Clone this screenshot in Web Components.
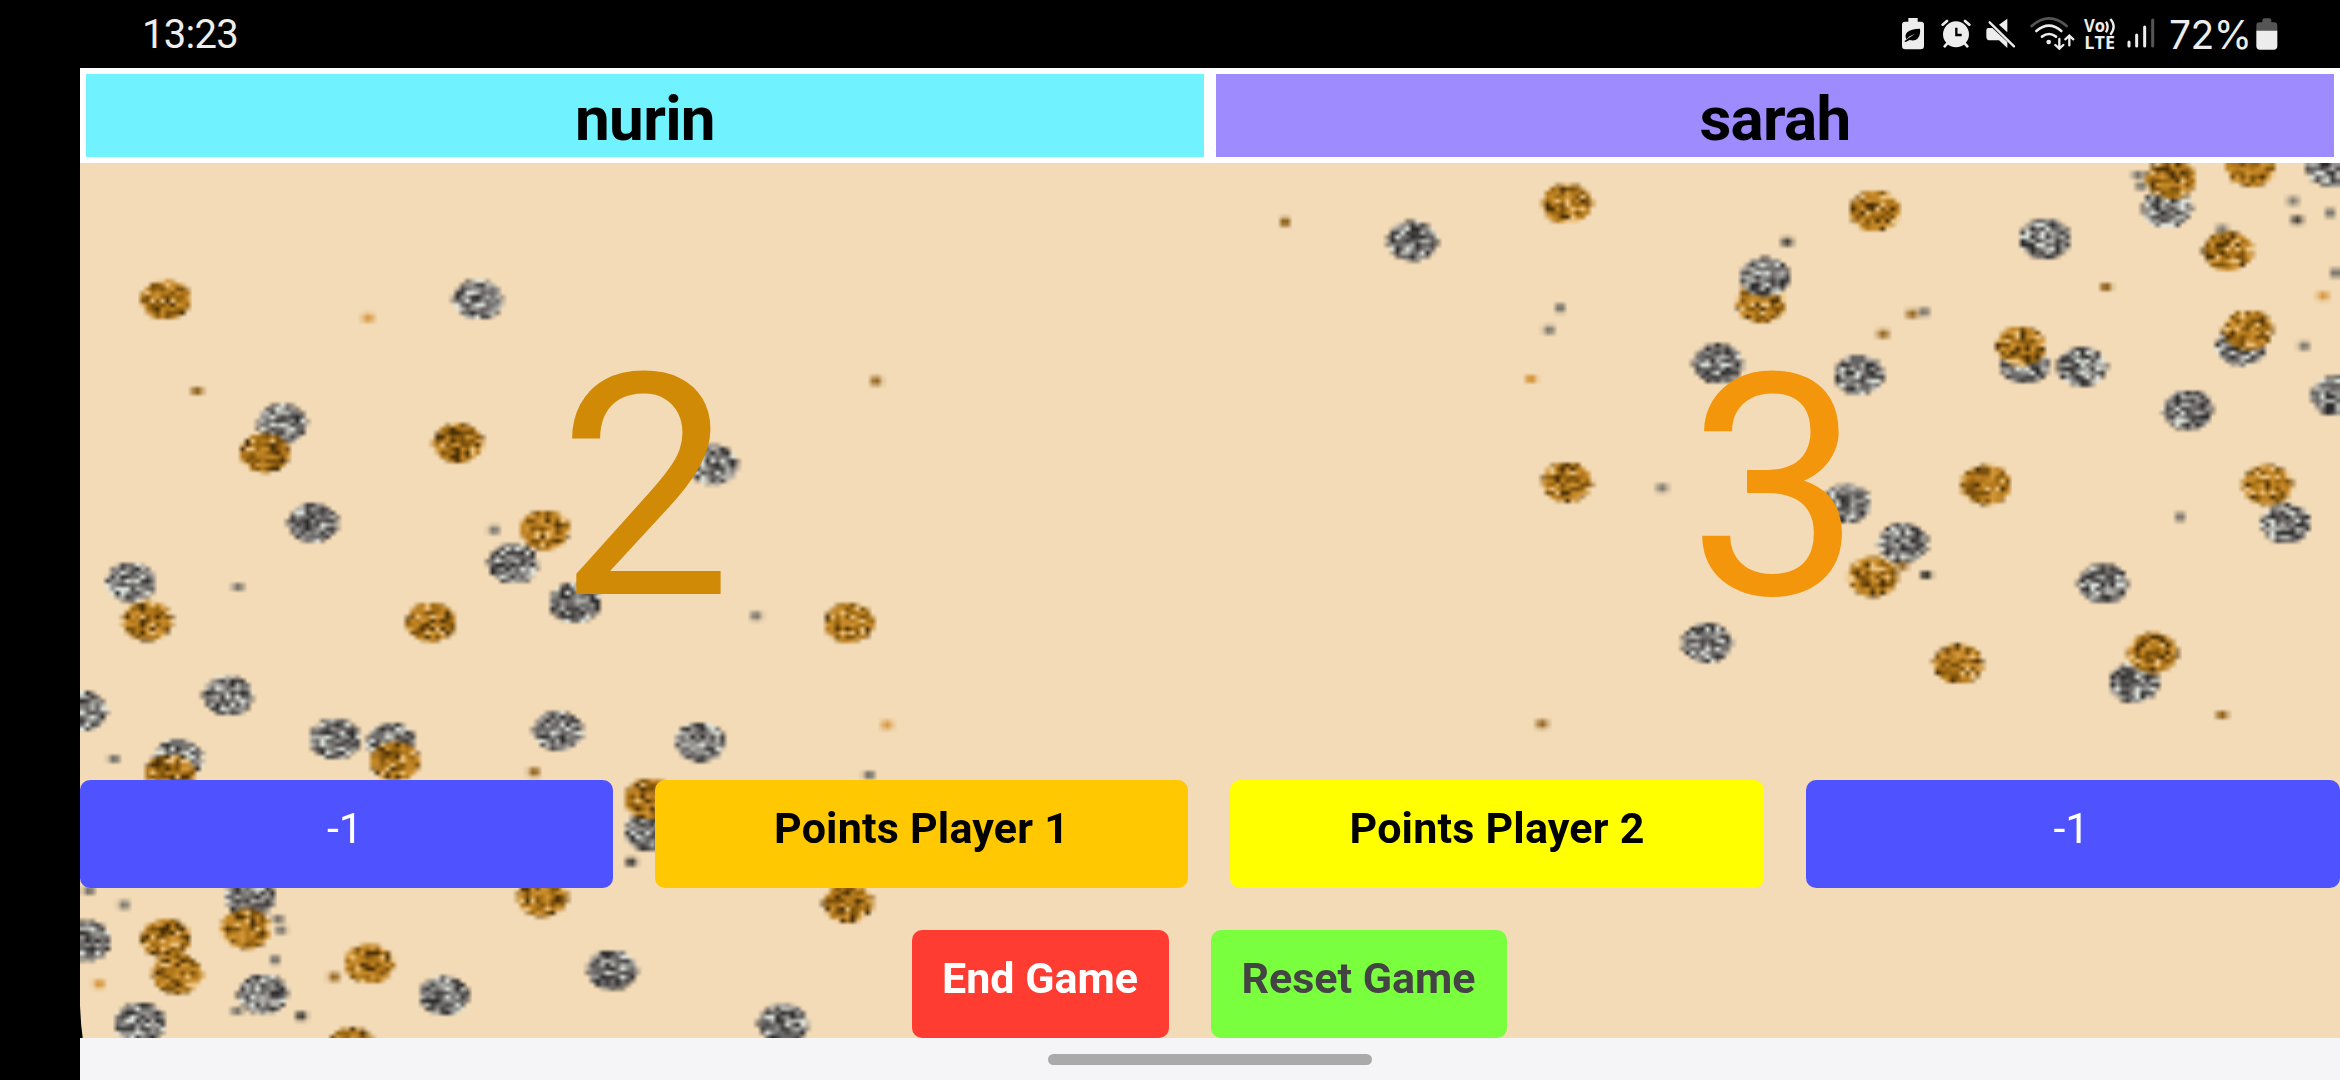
<!DOCTYPE html>
<html lang="en">
<head>
<meta charset="utf-8">
<title>Score counter</title>
<style>
html,body{margin:0;height:100%;background:#000;overflow:hidden}
body{font-family:Roboto,"Liberation Sans",sans-serif}
</style>
</head>
<body>
<score-app></score-app>
<script>
const define = (name, html, setup) => customElements.define(name, class extends HTMLElement {
  constructor() {
    super();
    this.attachShadow({mode: 'open'}).innerHTML = html;
  }
  connectedCallback() { if (setup) setup(this, this.shadowRoot); }
});

define('status-bar', `
<style>
:host{display:flex;height:68px;box-sizing:border-box;padding:13px 62px 0 142px;justify-content:space-between;background:#000;color:#ededed}
.icons{display:flex;height:40px}
svg{display:block;height:40px;flex:none}
.t{font-size:40px;line-height:44px;height:44px;white-space:nowrap;letter-spacing:-.7px}
.pct{width:80px;margin:0 7px 0 14px;font-family:Inter,sans-serif;font-size:39px;letter-spacing:-.6px}
</style>
<div class="t">13:23</div>
<div class="icons">
<svg style="width:22px;margin-right:17px" viewBox="129 40 66 120"><path fill="#ededed" d="M148 55h28v11h10q9 0 9 9v64q0 10-10 10h-46q-10 0-10-10V75q0-9 9-9h10z"/><path fill="#000" d="M142 119c-8-18 4-31 41-32 3 25-10 40-31 34l-12 6-4-2 13-10 20-13-17 8z"/></svg>
<svg style="width:30px;margin-right:15px" viewBox="245 40 90 120"><g fill="none" stroke="#ededed" stroke-width="8" stroke-linecap="round"><path d="M250 75l13-11M330 75l-13-11M264 131l-8 9M316 131l8 9"/></g><circle cx="290" cy="104" r="39" fill="#ededed"/><path d="M291 84v22h16" fill="none" stroke="#000" stroke-width="7"/></svg>
<svg style="width:30px;margin-right:14px" viewBox="380 40 90 120"><path fill="#ededed" d="M444 57v41l-25-23zM381 91q0-6 6-6h12l45 42v18l-25-23h-27q-11 0-11-11z"/><path d="M391 68l73 72" stroke="#ededed" stroke-width="7" stroke-linecap="round"/></svg>
<svg style="width:45px;margin-right:9px" viewBox="512 40 135 120"><g fill="none" stroke-linecap="round" stroke-width="8"><path stroke="#555" d="M517 79Q569 33 622 79"/><g stroke="#ededed"><path d="M531 94Q569 62 606 94M548 111Q569 95 590 111"/><path stroke-width="7" d="M600 118v26M588 136l12 11 12-11M630 137v-26M618 119l12-11 12 11"/></g></g><circle cx="568" cy="127" r="7" fill="#ededed"/></svg>
<svg style="width:32px;margin-right:11px" viewBox="672 40 96 120"><g fill="#ededed" font-family="Open Sans,sans-serif" font-weight="700"><text x="672" y="96" font-size="54" textLength="63" lengthAdjust="spacingAndGlyphs">Vo</text><text x="673" y="148" font-size="54" textLength="92" lengthAdjust="spacingAndGlyphs">LTE</text></g><g fill="none" stroke="#ededed" stroke-width="7"><path d="M738 66q10 15 0 32M751 58q20 22 0 47"/></g></svg>
<svg style="width:28px" viewBox="803 40 84 120"><g stroke="#ededed" stroke-width="9" stroke-linecap="round"><path d="M809 127v12M832 106v33M856 82v57"/><path stroke="#555" d="M880 61v78"/></g></svg>
<div class="t pct">72%</div>
<svg style="width:22px" viewBox="1190 40 66 120"><path fill="#555" d="M1191 94V78q0-10 10-10h8v-6q0-6 6-6h15q6 0 6 6v6h8q10 0 10 10v16z"/><path fill="#ededed" d="M1191 93h63v46q0 11-11 11h-41q-11 0-11-11z"/></svg>
</div>`);

define('player-name', `
<style>
:host{display:block;flex:1;margin:6px;height:83px;box-sizing:border-box;background:var(--fill);font:bold 62px/90px Roboto,sans-serif;text-align:center;color:#000;letter-spacing:-.7px}
</style><slot></slot>`);

define('score-value', `
<style>
:host{display:block;flex:1;text-align:center;font:400 310px/363px Roboto,sans-serif;color:var(--ink)}
</style><slot></slot>`);

define('game-button', `
<style>
:host{display:block;box-sizing:border-box;height:108px;border-radius:10px;background:var(--fill);color:var(--ink,#000);font:700 43px/97px Roboto,sans-serif;text-align:center;white-space:nowrap}
:host([light]){font-weight:400;padding-right:3px}
</style><slot></slot>`);

// [x, y] centres in window coordinates; drawn in list order so later dots overlap earlier ones.
const DOTS = {
 s:[[479,299],[283,423],[314,522],[132,581],[514,563],[576,602],[229,695],[83,710],[336,738],[392,742],[559,730],[179,758],[651,830],[251,897],[87,940],[141,1022],[264,993],[445,995],[613,969],[714,464],[701,741],[784,1023],[1413,240],[1719,363],[1860,374],[2046,238],[2026,363],[2083,366],[2168,207],[2332,166],[2242,345],[2337,395],[2189,409],[1847,503],[1904,542],[1708,642],[2287,523],[2104,583],[2135,682]],
 g:[[167,299],[266,452],[459,442],[149,620],[546,529],[432,621],[396,760],[171,773],[651,798],[543,896],[247,928],[167,938],[178,973],[370,963],[353,1047],[850,622],[849,902],[1568,203],[1876,210],[1762,302],[2022,345],[2172,178],[2252,166],[2229,250],[2249,329],[1568,481],[1874,576],[1987,484],[2269,484],[1959,663],[2153,652]],
 top:[[1766,276]]
};
const SPECKS = {
 '#d4943a':[[368,318],[887,725],[1531,379],[99,984],[2323,296]],
 '#8f601c':[[197,391],[534,772],[334,977],[876,381],[1285,222],[1912,314],[1883,334],[2106,287],[1542,724],[2222,715],[1902,566]],
 '#78746b':[[238,587],[494,530],[114,759],[89,891],[124,905],[278,919],[281,930],[275,960],[237,1011],[756,616],[869,775],[1560,308],[1549,330],[1924,312],[2138,175],[2141,186],[2293,201],[2330,213],[2222,229],[2335,273],[2304,346],[1662,488],[2180,517]],
 '#3a3731':[[631,862],[301,1016],[1787,242],[2297,220],[1926,575]]
};
const GOLD = ['#4a2e04','#7d520f','#99660f','#b27a1c','#c78a28','#b0741a','#d3973a','#efc581','#7a4f0c','#c08426'];
const SILVER = ['#2b2a2b','#4b4848','#666262','#777371','#95928f','#6c6a69','#b2b2ac','#dde3dc','#403e3d','#8f918e'];

define('glitter-layer', `
<style>:host{display:block}canvas{display:block;width:2260px;height:876px}</style>
<canvas width="452" height="219"></canvas>`, (host, root) => {
  const c = root.querySelector('canvas').getContext('2d');
  let seed = 7321;
  const rnd = () => (seed = (seed * 16807) % 2147483647) / 2147483647;
  const dot = (p, tones) => {
    const cx = (p[0] - 81) / 5, cy = (p[1] - 162) / 4;
    for (let y = Math.floor(cy - 6); y < cy + 6; y++)
      for (let x = Math.floor(cx - 6); x < cx + 6; x++) {
        const d = Math.hypot(x + .5 - cx, y + .5 - cy);
        if (d > 5.2) continue;
        c.globalAlpha = d > 4.8 ? .55 : 1;
        c.fillStyle = tones[Math.floor(rnd() * tones.length)];
        c.fillRect(x, y, 1, 1);
      }
    c.globalAlpha = 1;
  };
  DOTS.s.forEach(p => dot(p, SILVER));
  DOTS.g.forEach(p => dot(p, GOLD));
  DOTS.top.forEach(p => dot(p, SILVER));
  for (const tone in SPECKS) for (const p of SPECKS[tone]) {
    c.fillStyle = tone;
    c.fillRect((p[0] - 80) / 5 - 1, (p[1] - 163) / 4 - 1, 2, 2);
  }
});

define('play-field', `
<style>
:host{display:grid;height:875px;background:#f3dbb7;overflow:hidden;clip-path:polygon(0 0,100% 0,100% 100%,2.7px 100%,1.2px 862px,0 843px)}
glitter-layer,.content{grid-area:1/1}
.content{display:flex;flex-direction:column;height:875px;z-index:1}
.scores{display:flex;height:617px;box-sizing:border-box;padding-top:144px}
.row{display:grid;grid-template-columns:533px 533px 534px 534px;gap:42px}
.actions{display:flex;gap:42px;justify-content:center;margin:42px 2px 0 0}
</style>
<glitter-layer></glitter-layer>
<div class="content">
<div class="scores"><score-value style="--ink:#d18a06">2</score-value><score-value style="--ink:#f3960b">3</score-value></div>
<div class="row">
<game-button light style="--fill:#4f52ff;--ink:#fff">-1</game-button>
<game-button style="--fill:#ffc800;letter-spacing:.2px">Points Player 1</game-button>
<game-button style="--fill:#ff0;letter-spacing:.2px">Points Player 2</game-button>
<game-button light style="--fill:#4f52ff;--ink:#fff">-1</game-button>
</div>
<div class="actions">
<game-button style="--fill:#ff3c32;--ink:#fff;width:257px">End Game</game-button>
<game-button style="--fill:#7aff3e;--ink:#444;width:296px">Reset Game</game-button>
</div>
</div>`);

define('gesture-bar', `
<style>
:host{display:flex;justify-content:center;height:42px;box-sizing:border-box;padding-top:16px;background:#f5f5f8}
div{width:324px;height:11px;border-radius:6px;background:#aaa}
</style><div></div>`);

define('score-app', `
<style>
:host{display:flex;flex-direction:column;width:2340px;height:1080px;background:#000}
main{margin-left:80px}
header{display:flex;background:#fff}
</style>
<status-bar></status-bar>
<main>
<header><player-name style="--fill:#70f2ff">nurin</player-name><player-name style="--fill:#9e8cff">sarah</player-name></header>
<play-field></play-field>
<gesture-bar></gesture-bar>
</main>`);
</script>
</body>
</html>
